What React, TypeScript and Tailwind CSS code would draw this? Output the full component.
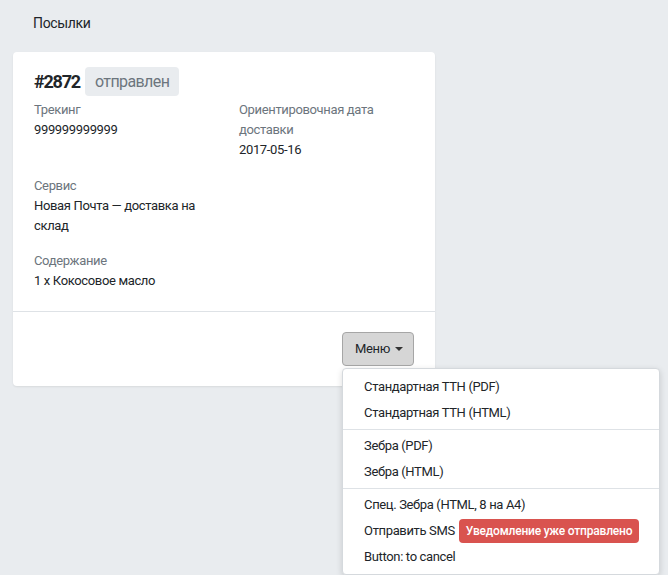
import { useState } from 'react';

function Field({ label, children }: { label: string; children: React.ReactNode }) {
  return (
    <div>
      <div className="text-[#6c757d]">{label}</div>
      <div className="text-[#212529]">{children}</div>
    </div>
  );
}

export default function App() {
  const [open] = useState(true);

  return (
    <div className="min-h-[575px] bg-[#e9ecef] px-[13px] pt-[13px] font-['Roboto',sans-serif] text-[13px] leading-5 tracking-[-0.35px] text-[#212529]">
      <h1 className="mb-[19px] px-5 text-[14px] leading-5">Посылки</h1>

      <div className="w-[422px] rounded bg-white shadow-[0_1px_2px_rgba(0,0,0,0.08)]">
        <div className="px-[21px] pb-5 pt-[15px]">
          <div className="mb-1 flex items-center gap-[5px]">
            <span className="text-[18px] font-bold leading-[29px] tracking-[-1.2px]">#2872</span>
            <span className="rounded bg-[#e9ecef] px-[10px] text-[16px] leading-[29px] tracking-[-0.6px] text-[#6c757d]">отправлен</span>
          </div>

          <div className="grid grid-cols-2 gap-x-[30px] gap-y-4">
            <Field label="Трекинг">999999999999</Field>
            <Field label="Ориентировочная дата доставки">2017-05-16</Field>
            <Field label="Сервис">Новая Почта — доставка на склад</Field>
            <div />
          </div>
          <div className="mt-[15px]">
            <Field label="Содержание">1 x Кокосовое масло</Field>
          </div>
        </div>

        <div className="flex justify-end border-t border-[#dee2e6] px-[21px] pb-[20px] pt-5">
          <div className="relative">
            <button className="flex h-[34px] items-center gap-[5px] rounded border border-[#a6a6a6] bg-[#d6d6d6] pl-[12px] pr-[10px] text-[13px] text-[#212529]">
              Меню
              <span className="h-0 w-0 border-x-[4px] border-t-[4px] border-x-transparent border-t-[#333]" />
            </button>

            {open && (
              <div className="absolute left-0 top-[36px] z-10 w-[318px] whitespace-nowrap rounded border border-[#d5d9dd] bg-white pb-[4px] pt-[5px] shadow-[0_2px_6px_rgba(0,0,0,0.15)]">
                <div className="px-[21px] py-[3px]">Стандартная ТТН (PDF)</div>
                <div className="px-[21px] py-[3px]">Стандартная ТТН (HTML)</div>
                <div className="mb-[3px] mt-[3px] border-t border-[#dee2e6]" />
                <div className="px-[21px] py-[3px]">Зебра (PDF)</div>
                <div className="px-[21px] py-[3px]">Зебра (HTML)</div>
                <div className="mb-[3px] mt-[3px] border-t border-[#dee2e6]" />
                <div className="px-[21px] py-[3px]">Спец. Зебра (HTML, 8 на A4)</div>
                <div className="flex items-center gap-[4px] px-[21px] py-[1px]">
                  Отправить SMS
                  <span className="rounded bg-[#d9534f] px-[7px] text-[12px] font-medium leading-[24px] tracking-[-0.2px] text-white">
                    Уведомление уже отправлено
                  </span>
                </div>
                <div className="px-[21px] py-[3px]">Button: to cancel</div>
              </div>
            )}
          </div>
        </div>
      </div>
    </div>
  );
}
